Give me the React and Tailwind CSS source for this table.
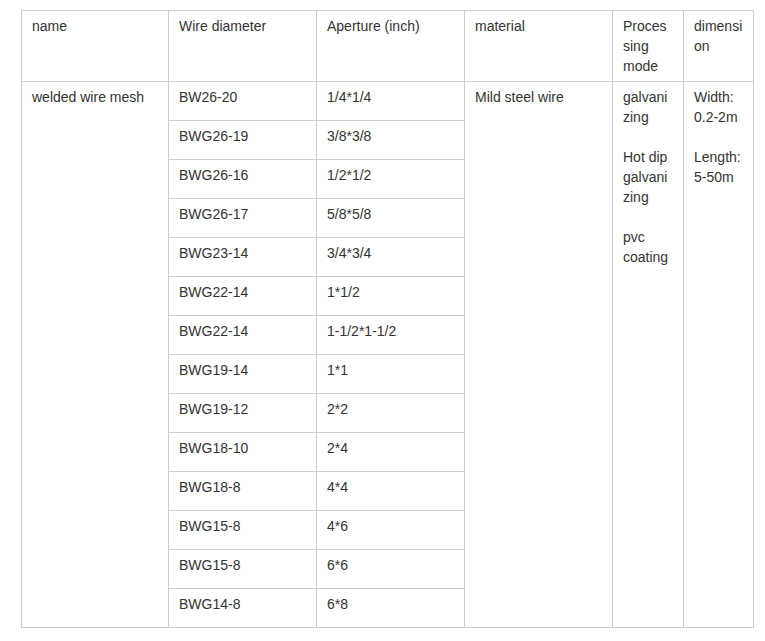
const rows = [
  ['BW26-20', '1/4*1/4'],
  ['BWG26-19', '3/8*3/8'],
  ['BWG26-16', '1/2*1/2'],
  ['BWG26-17', '5/8*5/8'],
  ['BWG23-14', '3/4*3/4'],
  ['BWG22-14', '1*1/2'],
  ['BWG22-14', '1-1/2*1-1/2'],
  ['BWG19-14', '1*1'],
  ['BWG19-12', '2*2'],
  ['BWG18-10', '2*4'],
  ['BWG18-8', '4*4'],
  ['BWG15-8', '4*6'],
  ['BWG15-8', '6*6'],
  ['BWG14-8', '6*8'],
]

const cell = 'border border-[#cccccc] align-top px-[10px] pt-[5px] pb-0 text-left font-normal break-words'

export default function App() {
  return (
    <div className="bg-white min-h-[641px] pt-[10px] pl-[21px] text-[14px] leading-[20px] text-[#333333] font-['Liberation_Sans',Arial,sans-serif]">
      <table className="table-fixed border-collapse w-[733px]">
        <colgroup>
          <col className="w-[147px]" />
          <col className="w-[148px]" />
          <col className="w-[148px]" />
          <col className="w-[148px]" />
          <col className="w-[71px]" />
          <col className="w-[70px]" />
        </colgroup>
        <tbody>
          <tr className="h-[71px]">
            <td className={cell}>name</td>
            <td className={cell}>Wire diameter</td>
            <td className={cell}>Aperture (inch)</td>
            <td className={cell}>material</td>
            <td className={cell}>Processing mode</td>
            <td className={cell}>dimension</td>
          </tr>
          {rows.map(([wire, ap], i) => (
            <tr key={i} className="h-[39px]">
              {i === 0 && <td rowSpan={14} className={cell}>welded wire mesh</td>}
              <td className={cell}>{wire}</td>
              <td className={cell}>{ap}</td>
              {i === 0 && (
                <>
                  <td rowSpan={14} className={cell}>Mild steel wire</td>
                  <td rowSpan={14} className={cell}>
                    <p>galvanizing</p>
                    <p className="mt-[20px]">Hot dip galvanizing</p>
                    <p className="mt-[20px]">pvc coating</p>
                  </td>
                  <td rowSpan={14} className={cell}>
                    <p>Width: 0.2-2m</p>
                    <p className="mt-[20px]">Length: 5-50m</p>
                  </td>
                </>
              )}
            </tr>
          ))}
        </tbody>
      </table>
    </div>
  )
}
